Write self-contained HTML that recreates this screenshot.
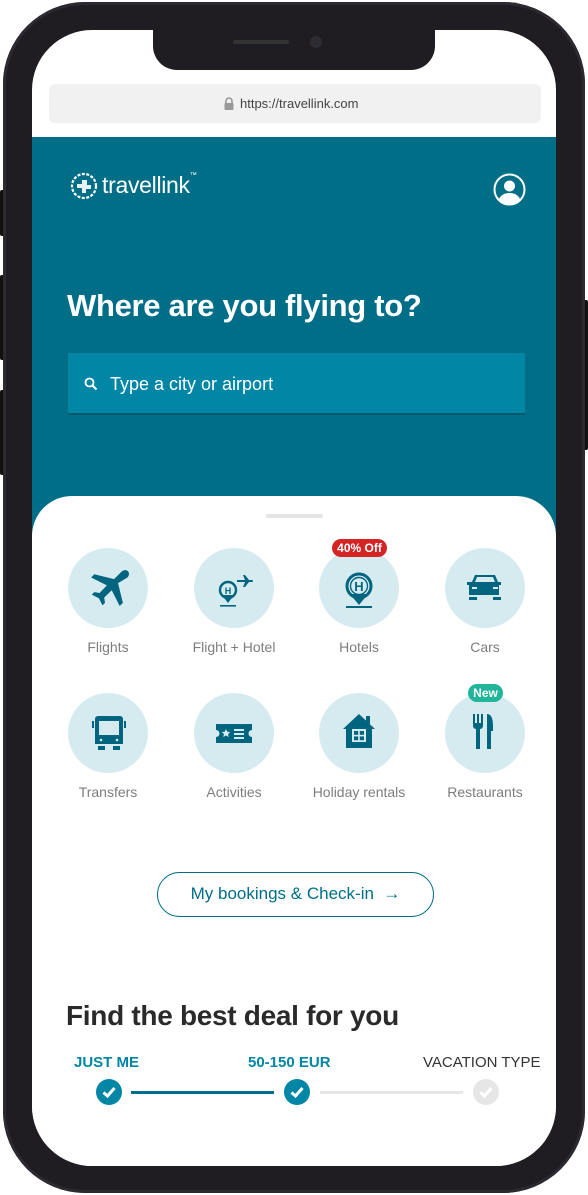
<!DOCTYPE html>
<html><head><style>
*{margin:0;padding:0;box-sizing:border-box}
body{width:588px;height:1195px;background:#fff;position:relative;overflow:hidden;font-family:"Liberation Sans",sans-serif}
.a{position:absolute}
.frame{left:3px;top:2px;width:582px;height:1191px;border-radius:82px;background:#1f1d22;box-shadow:inset 0 0 0 3px #2c2a30}
.screen{left:32px;top:30px;width:524px;height:1136px;border-radius:60px;background:#fff;overflow:hidden}
.notch{left:153px;top:30px;width:282px;height:40px;background:#1f1d22;border-radius:0 0 24px 24px}
.circ{width:80px;height:80px;border-radius:50%;background:#d5ebf0}
.lbl{width:140px;text-align:center;font-size:14px;color:#7d7d7d}
.ic{fill:#01657f}
</style></head><body>
<div class="a" style="left:0;top:190px;width:6px;height:46px;background:#111;border-radius:2px"></div>
<div class="a" style="left:0;top:275px;width:6px;height:85px;background:#111;border-radius:2px"></div>
<div class="a" style="left:0;top:390px;width:6px;height:85px;background:#111;border-radius:2px"></div>
<div class="a" style="left:582px;top:300px;width:6px;height:150px;background:#111;border-radius:2px"></div>
<div class="a frame"></div>
<div class="a screen">
 <div class="a" style="left:17px;top:54px;width:492px;height:39px;background:#f1f1f1;border-radius:6px"></div>
 <div class="a" style="left:0;top:107px;width:524px;height:400px;background:#016e87"></div>
 <div class="a" style="left:36px;top:323px;width:457px;height:60px;background:#0186a5;box-shadow:0 2px 0 #015a70"></div>
 <div class="a" style="left:0;top:466px;width:524px;height:700px;background:#fff;border-radius:40px 40px 0 0"></div>
</div>
<div class="a notch"></div>
<div class="a" style="left:233px;top:40px;width:56px;height:4px;background:#333;border-radius:2px"></div>
<div class="a" style="left:310px;top:36px;width:12px;height:12px;background:#2d2c33;border-radius:50%"></div>
<svg class="a" style="left:224px;top:97px" width="10" height="13" viewBox="0 0 10 13"><path d="M2 6V4a3 3 0 0 1 6 0v2" stroke="#999" stroke-width="1.6" fill="none"/><rect x="0.5" y="6" width="9" height="7" rx="1" fill="#999"/></svg>
<div class="a" style="left:240px;top:96px;font-size:13px;color:#444">https://travellink.com</div>
<svg class="a" style="left:70px;top:172px" width="28" height="28" viewBox="0 0 28 28"><circle cx="14" cy="14" r="12" fill="none" stroke="#fff" stroke-width="2.2" stroke-dasharray="3 1.5"/><path d="M7 12h5v-4h5v5h4v4h-5v4h-4v-5H7z" fill="#fff" opacity=".9"/></svg>
<div class="a" style="left:102px;top:172px;font-size:23px;color:#fff;letter-spacing:-0.3px">travellink<span style="font-size:7px;vertical-align:top">™</span></div>
<svg class="a" style="left:493px;top:173px" width="33" height="33" viewBox="0 0 33 33"><circle cx="16.5" cy="16.5" r="15" fill="#016e87" stroke="#fff" stroke-width="2"/><circle cx="16.5" cy="13" r="5.5" fill="#fff"/><path d="M5.5 27c2-5 6-7 11-7s9 2 11 7a15 15 0 0 1-22 0z" fill="#fff"/></svg>
<div class="a" style="left:67px;top:288px;font-size:31px;font-weight:bold;color:#fff;letter-spacing:-0.3px">Where are you flying to?</div>
<svg class="a" style="left:84px;top:377px" width="14" height="14" viewBox="0 0 14 14"><circle cx="5.5" cy="5.5" r="4" stroke="#fff" stroke-width="1.8" fill="none"/><path d="M8.5 8.5l4 4" stroke="#fff" stroke-width="2"/></svg>
<div class="a" style="left:110px;top:374px;font-size:18px;color:#fff">Type a city or airport</div>
<div class="a" style="left:266px;top:514px;width:57px;height:4px;background:#e5e5e5;border-radius:2px"></div>
<div class="a circ" style="left:68px;top:548px"></div>
<div class="a circ" style="left:194px;top:548px"></div>
<div class="a circ" style="left:319px;top:548px"></div>
<div class="a circ" style="left:445px;top:548px"></div>
<div class="a circ" style="left:68px;top:693px"></div>
<div class="a circ" style="left:194px;top:693px"></div>
<div class="a circ" style="left:319px;top:693px"></div>
<div class="a circ" style="left:445px;top:693px"></div>
<svg class="a" style="left:88px;top:568px" width="42" height="42" viewBox="2 2 20 20"><path class="ic" d="M21 3.5c-.8-.8-2.2-.6-3 .2l-3.6 3.6L5 5 3.5 6.5l7.5 3.8-3.5 3.6-2.5-.4-1.2 1.2 3.4 1.7 1.7 3.4 1.2-1.2-.4-2.5 3.6-3.5 3.8 7.5 1.5-1.5-2.3-9.4L20.8 6.5c.8-.8 1-2.2.2-3z"/></svg>
<svg class="a" style="left:214px;top:570px" width="40" height="38" viewBox="0 0 40 38"><circle cx="14" cy="20" r="8" fill="none" stroke="#01657f" stroke-width="2.4"/><path d="M8 25l6 8 6-8" class="ic"/><text x="14" y="24" font-size="9" font-weight="bold" text-anchor="middle" fill="#01657f" font-family="Liberation Sans">H</text><rect x="6" y="35" width="16" height="1.6" class="ic"/><path class="ic" d="M23 10h8l-2-5h2l4 5h3a1 1 0 0 1 0 2h-3l-4 5h-2l2-5h-8z"/></svg>
<svg class="a" style="left:339px;top:568px" width="40" height="42" viewBox="0 0 40 42"><circle cx="20" cy="18" r="12" fill="none" stroke="#01657f" stroke-width="3"/><path d="M11 26l9 11 9-11" class="ic"/><circle cx="20" cy="18" r="8.5" fill="none" stroke="#01657f" stroke-width="1.4"/><text x="20" y="23" font-size="13" font-weight="bold" text-anchor="middle" fill="#01657f" font-family="Liberation Sans">H</text><rect x="7" y="38" width="26" height="2" class="ic"/></svg>
<svg class="a" style="left:465px;top:573px" width="40" height="30" viewBox="0 0 40 30"><path class="ic" d="M7 9l3-7h20l3 7h3v3h-2v10H4V12H2V9zM10 9h20l-2-5H12z" fill-rule="evenodd"/><rect x="7" y="14" width="5" height="2" fill="#d5ebf0"/><rect x="28" y="14" width="5" height="2" fill="#d5ebf0"/><rect x="4" y="24" width="8" height="3" class="ic"/><rect x="28" y="24" width="8" height="3" class="ic"/></svg>
<svg class="a" style="left:89px;top:713px" width="40" height="40" viewBox="0 0 40 40"><path class="ic" d="M9 3h22a3 3 0 0 1 3 3v25H6V6a3 3 0 0 1 3-3z"/><rect x="10" y="8" width="20" height="14" fill="#d5ebf0"/><circle cx="12" cy="27" r="1.3" fill="#d5ebf0"/><circle cx="28" cy="27" r="1.3" fill="#d5ebf0"/><rect x="3" y="8" width="2" height="7" class="ic"/><rect x="35" y="8" width="2" height="7" class="ic"/><rect x="9" y="33" width="7" height="4" class="ic"/><rect x="24" y="33" width="7" height="4" class="ic"/></svg>
<svg class="a" style="left:214px;top:722px" width="40" height="24" viewBox="0 0 40 24"><path class="ic" d="M2 2h36v6a3 3 0 0 0 0 7v6H2v-6a3 3 0 0 0 0-7z"/><path d="M12 7l1.3 2.7 3 .3-2.2 2 .6 3-2.7-1.5-2.7 1.5.6-3-2.2-2 3-.3z" fill="#d5ebf0"/><rect x="20" y="7" width="10" height="2" fill="#d5ebf0"/><rect x="20" y="11" width="10" height="2" fill="#d5ebf0"/><rect x="20" y="15" width="10" height="2" fill="#d5ebf0"/></svg>
<svg class="a" style="left:339px;top:711px" width="40" height="40" viewBox="0 0 40 40"><path class="ic" d="M20 3l16 15h-3v19H7V18H4z"/><rect x="27" y="5" width="4" height="8" class="ic"/><rect x="13" y="18" width="14" height="13" fill="#d5ebf0"/><rect x="15" y="20" width="4.2" height="3.8" class="ic"/><rect x="20.8" y="20" width="4.2" height="3.8" class="ic"/><rect x="15" y="25.4" width="4.2" height="3.8" class="ic"/><rect x="20.8" y="25.4" width="4.2" height="3.8" class="ic"/></svg>
<svg class="a" style="left:465px;top:712px" width="40" height="40" viewBox="0 0 40 40"><path class="ic" d="M8 2h2v9h2V2h2v9h2V2h2v12a3 3 0 0 1-3 3v20h-4V17a3 3 0 0 1-3-3z"/><path class="ic" d="M22 2c4 0 6 4 6 12v5h-2v18h-4z"/></svg>
<div class="a" style="left:332px;top:539px;width:55px;height:18px;border-radius:9px;background:#d52424;color:#fff;font-size:12px;font-weight:bold;text-align:center;line-height:18px">40% Off</div>
<div class="a" style="left:468px;top:684px;width:35px;height:18px;border-radius:9px;background:#22b59a;color:#fff;font-size:12px;font-weight:bold;text-align:center;line-height:18px">New</div>
<div class="a lbl" style="left:38px;top:639px">Flights</div>
<div class="a lbl" style="left:164px;top:639px">Flight + Hotel</div>
<div class="a lbl" style="left:289px;top:639px">Hotels</div>
<div class="a lbl" style="left:415px;top:639px">Cars</div>
<div class="a lbl" style="left:38px;top:784px">Transfers</div>
<div class="a lbl" style="left:164px;top:784px">Activities</div>
<div class="a lbl" style="left:289px;top:784px">Holiday rentals</div>
<div class="a lbl" style="left:415px;top:784px">Restaurants</div>
<div class="a" style="left:157px;top:872px;width:277px;height:45px;border:1.5px solid #016e87;border-radius:23px;color:#016e87;font-size:17px;text-align:center;line-height:42px">My bookings &amp; Check-in &nbsp;→</div>
<div class="a" style="left:66px;top:1000px;font-size:28px;font-weight:bold;color:#2a2a2a;letter-spacing:-0.3px">Find the best deal for you</div>
<div class="a" style="left:74px;top:1054px;font-size:15px;font-weight:bold;color:#0186a5">JUST ME</div>
<div class="a" style="left:248px;top:1054px;font-size:15px;font-weight:bold;color:#0186a5">50-150 EUR</div>
<div class="a" style="left:423px;top:1054px;font-size:15px;color:#333">VACATION TYPE</div>
<div class="a" style="left:131px;top:1091px;width:143px;height:3px;background:#01708a"></div>
<div class="a" style="left:320px;top:1091px;width:143px;height:3px;background:#e6e6e6"></div>
<svg class="a" style="left:95px;top:1078px" width="28" height="28" viewBox="0 0 28 28"><circle cx="14" cy="14" r="13" fill="#0186a5"/><path d="M8.5 14.5l4 3.5 7-8" stroke="#fff" stroke-width="3" fill="none"/></svg>
<svg class="a" style="left:283px;top:1078px" width="28" height="28" viewBox="0 0 28 28"><circle cx="14" cy="14" r="13" fill="#0186a5"/><path d="M8.5 14.5l4 3.5 7-8" stroke="#fff" stroke-width="3" fill="none"/></svg>
<svg class="a" style="left:472px;top:1078px" width="28" height="28" viewBox="0 0 28 28"><circle cx="14" cy="14" r="13" fill="#e6e6e6"/><path d="M8.5 14.5l4 3.5 7-8" stroke="#fff" stroke-width="3" fill="none"/></svg>
</body></html>
